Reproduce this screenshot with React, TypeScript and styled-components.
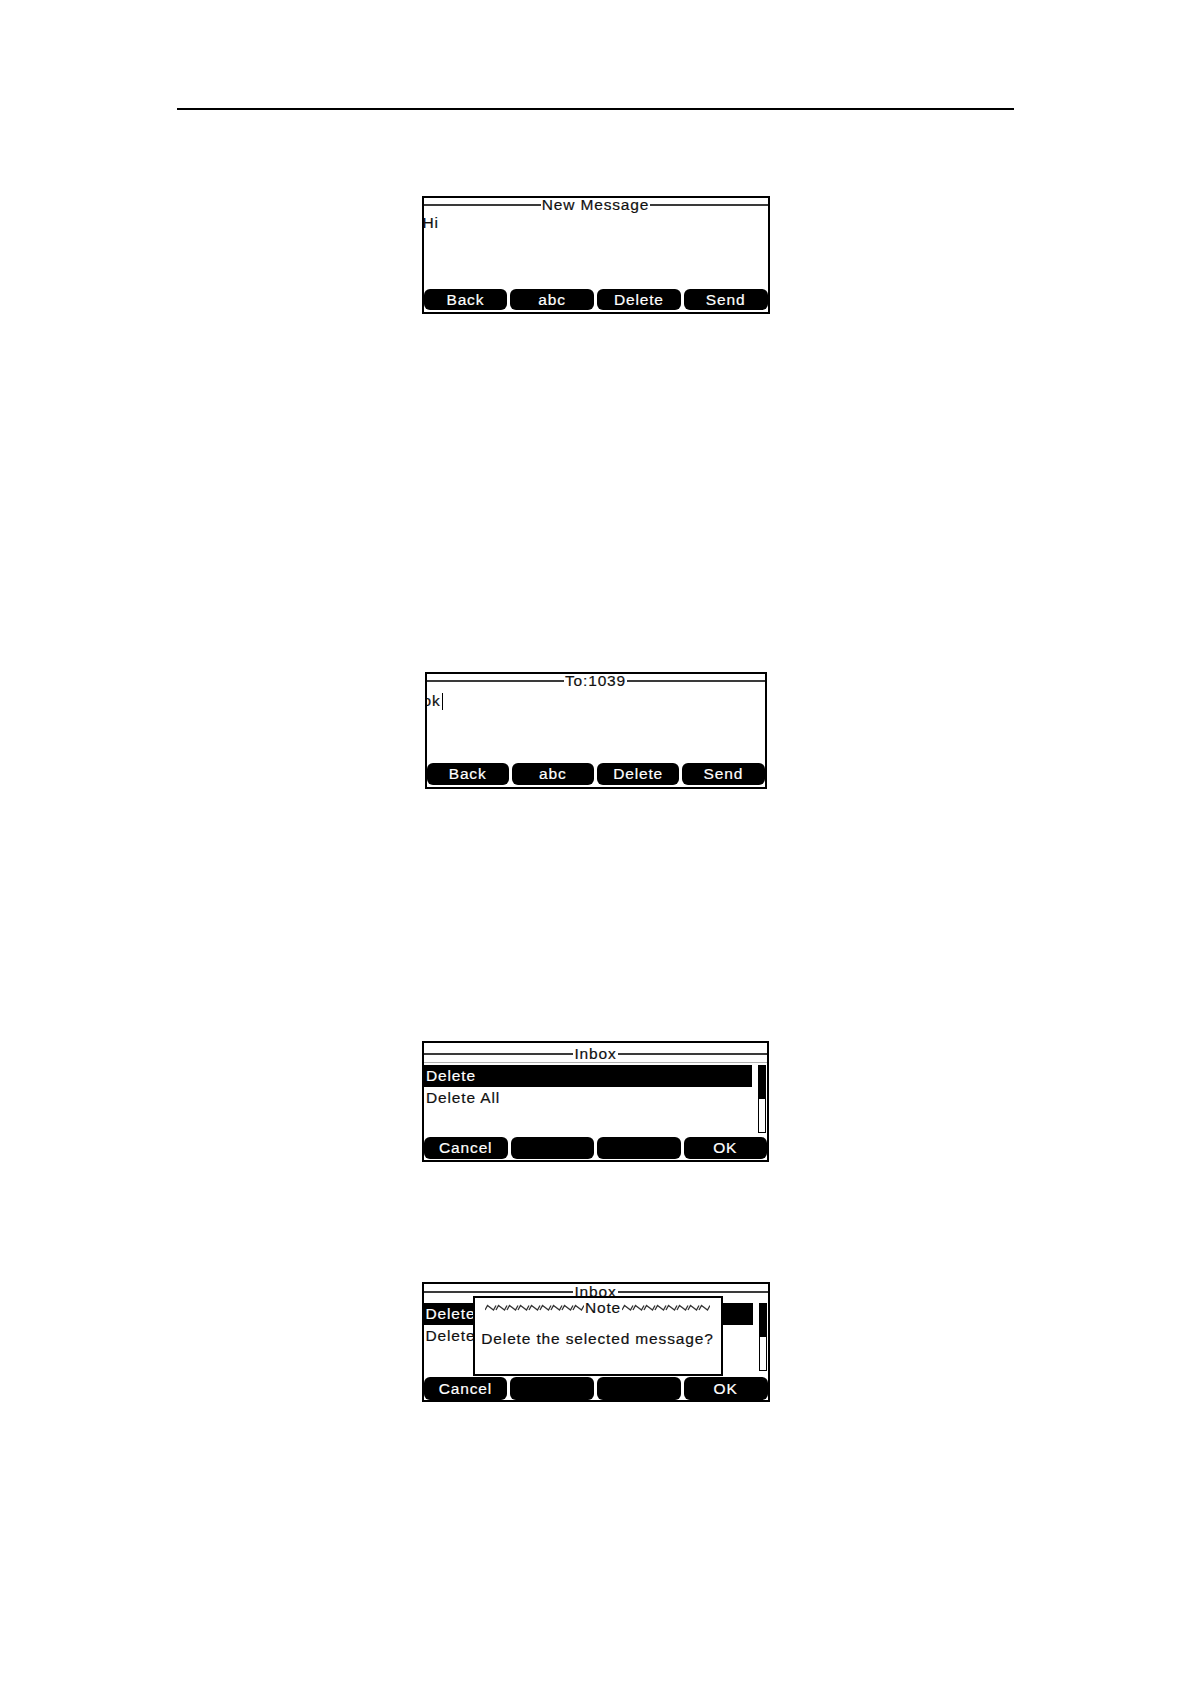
import { FC } from "react"
import styled, { createGlobalStyle } from "styled-components"

const GlobalStyle = createGlobalStyle`
  html,
  body {
    margin: 0;
    padding: 0;
    background: #fff;
  }
  body {
    font-family: "Liberation Sans", Arial, sans-serif;
  }
`

const Page = styled.div`
  width: 1191px;
  min-height: 1684px;
  box-sizing: border-box;
  padding-top: 108px;
  display: flex;
  flex-direction: column;
  align-items: center;
`

const HeaderRule = styled.hr`
  width: 837px;
  height: 2px;
  margin: 0;
  border: 0;
  background: #000;
`

const Screen = styled.div<{ $w: number; $h: number; $top: number }>`
  position: relative;
  box-sizing: border-box;
  width: ${({ $w }) => $w}px;
  height: ${({ $h }) => $h}px;
  margin-top: ${({ $top }) => $top}px;
  border: 2px solid #000;
  background: #fff;
  display: flex;
  flex-direction: column;
  overflow: hidden;
  font-family: "Liberation Sans", Arial, sans-serif;
  font-size: 15.5px;
  letter-spacing: 0.85px;
  -webkit-text-stroke: 0.2px currentColor;
  color: #111;
`

const TitleBar = styled.div<{ $pad: number }>`
  flex-shrink: 0;
  display: flex;
  align-items: center;
  gap: 1px;
  height: 14px;
  margin-top: ${({ $pad }) => $pad}px;
`

const TitleRule = styled.span`
  flex: 1;
  height: 2px;
  background: #3a3a3a;
`

const TitleText = styled.span`
  line-height: 14px;
  white-space: nowrap;
`

const TitleSeparator = styled.div`
  flex-shrink: 0;
  height: 1px;
  margin-top: 1px;
  background: #b0b0b0;
`

const MessageText = styled.div<{ $pad: number; $shift: number }>`
  display: flex;
  align-items: center;
  padding-top: ${({ $pad }) => $pad}px;
  margin-left: ${({ $shift }) => $shift}px;
  line-height: 18px;
`

const Cursor = styled.span`
  display: inline-block;
  width: 1px;
  height: 17px;
  margin-left: 1px;
  background: #000;
`

const Spacer = styled.div`
  flex: 1;
`

const SoftKeyRow = styled.div<{ $h: number; $pb: number }>`
  flex-shrink: 0;
  display: grid;
  grid-template-columns: repeat(4, 1fr);
  gap: 3px;
  height: ${({ $h }) => $h}px;
  padding-bottom: ${({ $pb }) => $pb}px;
`

const SoftKey = styled.div`
  display: flex;
  align-items: center;
  justify-content: center;
  border-radius: 6px;
  background: #000;
  color: #fff;
  line-height: 1;
  white-space: nowrap;
`

const ListArea = styled.div<{ $mt: number }>`
  flex-shrink: 0;
  display: flex;
  gap: 6px;
  height: 68px;
  margin-top: ${({ $mt }) => $mt}px;
  padding-right: 1px;
`

const Rows = styled.div`
  flex: 1;
  display: flex;
  flex-direction: column;
`

const Row = styled.div<{ $selected?: boolean }>`
  height: 22px;
  line-height: 22px;
  padding-left: 2px;
  white-space: nowrap;
  background: ${({ $selected }) => ($selected ? "#000" : "transparent")};
  color: ${({ $selected }) => ($selected ? "#fff" : "#111")};
`

const ScrollTrack = styled.div`
  width: 8px;
  box-sizing: border-box;
  border: 1px solid #000;
  display: flex;
  flex-direction: column;
`

const ScrollThumb = styled.div`
  height: 50%;
  background: #000;
`

const NoteDialog = styled.div`
  position: absolute;
  left: 49px;
  top: 12px;
  width: 250px;
  height: 80px;
  box-sizing: border-box;
  border: 2px solid #000;
  background: #fff;
  display: flex;
  flex-direction: column;
  align-items: center;
`

const NoteHeader = styled.div`
  display: flex;
  align-items: center;
  gap: 1px;
  height: 14px;
  margin-top: 3px;
`

const NoteText = styled.div`
  margin-top: 15px;
  line-height: 18px;
  white-space: nowrap;
`

const Wave: FC<{ count: number }> = ({ count }) => {
  let d = ""
  for (let i = 0; i < count; i++) {
    const x = i * 11
    d += `M${x} 6L${x + 2.5} 1.5L${x + 8.5} 6L${x + 11} 1.5`
  }
  return (
    <svg width={count * 11} height={8} viewBox={`0 0 ${count * 11} 8`}>
      <path d={d} fill="none" stroke="#333" strokeWidth={1.3} />
    </svg>
  )
}

const Title: FC<{ text: string; pad: number }> = ({ text, pad }) => (
  <TitleBar $pad={pad}>
    <TitleRule />
    <TitleText>{text}</TitleText>
    <TitleRule />
  </TitleBar>
)

const SoftKeys: FC<{ keys: string[]; h: number; pb: number }> = ({ keys, h, pb }) => (
  <SoftKeyRow $h={h} $pb={pb}>
    {keys.map((k, i) => (
      <SoftKey key={i}>{k}</SoftKey>
    ))}
  </SoftKeyRow>
)

const DeleteOptions: FC<{ mt: number }> = ({ mt }) => (
  <ListArea $mt={mt}>
    <Rows>
      <Row $selected>Delete</Row>
      <Row>Delete All</Row>
    </Rows>
    <ScrollTrack>
      <ScrollThumb />
    </ScrollTrack>
  </ListArea>
)

const editKeys = ["Back", "abc", "Delete", "Send"]
const confirmKeys = ["Cancel", "", "", "OK"]

export default function App() {
  return (
    <>
      <GlobalStyle />
      <Page>
        <HeaderRule />

        <Screen $w={348} $h={118} $top={86}>
          <Title text="New Message" pad={0} />
          <MessageText $pad={2} $shift={-1}>
            Hi
          </MessageText>
          <Spacer />
          <SoftKeys keys={editKeys} h={21} pb={2} />
        </Screen>

        <Screen $w={342} $h={117} $top={358}>
          <Title text="To:1039" pad={0} />
          <MessageText $pad={4} $shift={-4}>
            ok
            <Cursor />
          </MessageText>
          <Spacer />
          <SoftKeys keys={editKeys} h={22} pb={2} />
        </Screen>

        <Screen $w={347} $h={121} $top={252}>
          <Title text="Inbox" pad={4} />
          <TitleSeparator />
          <DeleteOptions mt={2} />
          <Spacer />
          <SoftKeys keys={confirmKeys} h={22} pb={1} />
        </Screen>

        <Screen $w={348} $h={120} $top={120}>
          <Title text="Inbox" pad={1} />
          <DeleteOptions mt={4} />
          <Spacer />
          <SoftKeys keys={confirmKeys} h={23} pb={0} />
          <NoteDialog>
            <NoteHeader>
              <Wave count={9} />
              <span>Note</span>
              <Wave count={8} />
            </NoteHeader>
            <NoteText>Delete the selected message?</NoteText>
          </NoteDialog>
        </Screen>
      </Page>
    </>
  )
}
